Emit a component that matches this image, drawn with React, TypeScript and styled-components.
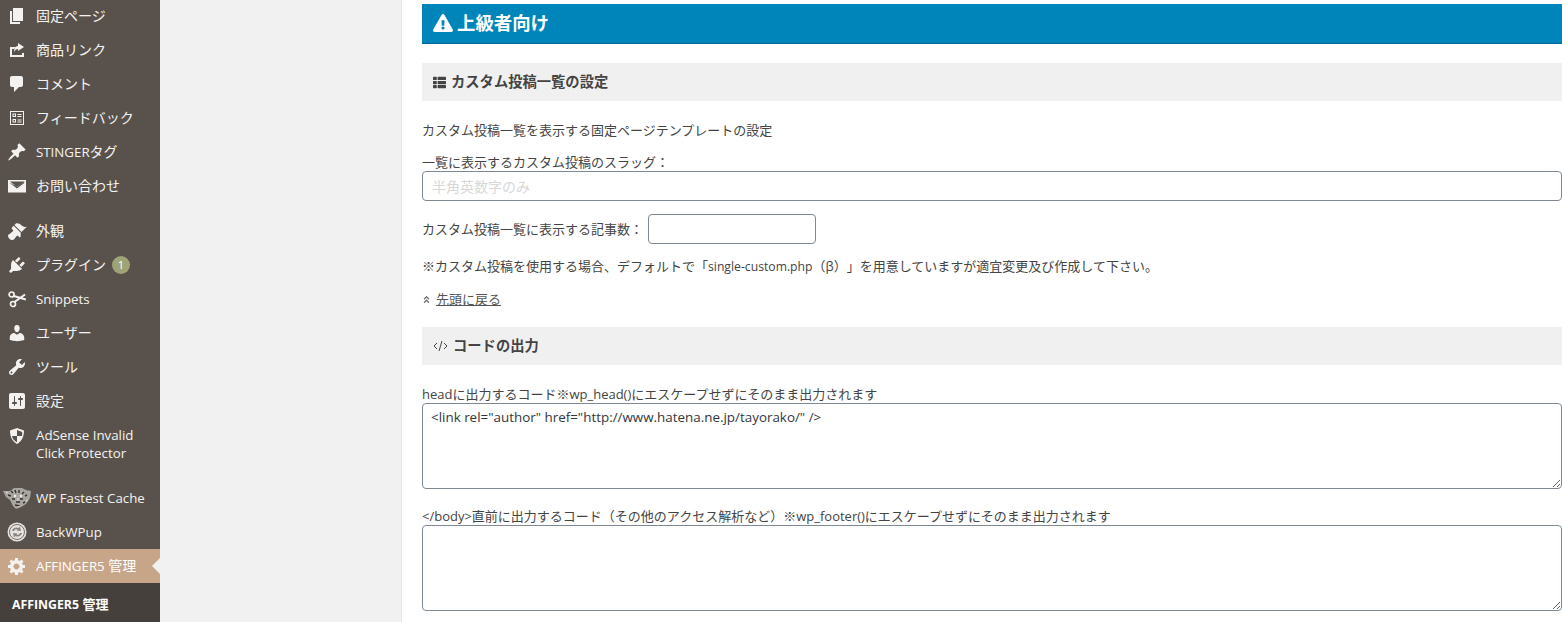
import React from 'react';
import styled, { createGlobalStyle } from 'styled-components';
import { FaAngleDoubleUp, FaExclamationTriangle, FaThList } from 'react-icons/fa';

const FONT = '"Open Sans", "Noto Sans CJK JP", sans-serif';

const GlobalStyle = createGlobalStyle`
	html, body {
		margin: 0;
		height: 622px;
		overflow: hidden;
		background: #f1f1f1;
		font-family: ${FONT};
		text-spacing-trim: space-all;
	}
`;

const Page = styled.div`
	display: flex;
	width: 1562px;
	height: 622px;
	overflow: hidden;
`;

const Sidebar = styled.nav`
	flex: none;
	width: 160px;
	height: 622px;
	background: #59524c;
	overflow: hidden;
	display: flex;
	flex-direction: column;
`;

const MenuItem = styled.div<{ $active?: boolean; $first?: boolean; $gap?: number }>`
	position: relative;
	flex: none;
	display: flex;
	align-items: center;
	box-sizing: border-box;
	height: ${(p) => (p.$first ? 33 : 34)}px;
	padding-bottom: ${(p) => (p.$first ? 1 : 0)}px;
	margin-top: ${(p) => p.$gap ?? 0}px;
	color: #f4f2f0;
	font-size: 14px;
	line-height: 18px;
	background: ${(p) => (p.$active ? '#c7a589' : 'transparent')};

	${(p) =>
		p.$active &&
		`color: #fff;
		&::after {
			content: '';
			position: absolute;
			right: 0;
			top: 9px;
			border: 8px solid transparent;
			border-right-color: #f1f1f1;
			border-left-width: 0;
		}`}
`;

const TallItem = styled(MenuItem)`
	height: auto;
	align-items: flex-start;
	padding: 8px 0;
`;

// Open Sans runs wider than the reference's latin, so latin runs are set a little smaller
const Latin = styled.span<{ $size?: number }>`
	font-size: ${(p) => p.$size ?? 13.3}px;
`;

const MenuIcon = styled.span`
	flex: none;
	width: 36px;
	height: 20px;
	display: flex;
	justify-content: center;
	align-items: center;
	padding-right: 2px;
	box-sizing: border-box;
	color: #f4f2f0;
`;

const Badge = styled.span`
	display: inline-flex;
	justify-content: center;
	align-items: center;
	width: 18px;
	height: 18px;
	margin-left: 6px;
	border-radius: 50%;
	background: #9ea476;
	color: #fff;
	font-size: 11px;
`;

const SubMenu = styled.div`
	flex: 1;
	background: #46403c;
	color: #fff;
	font-size: 13px;
	font-weight: 700;
	padding: 12px 0 0 12px;
	line-height: 18px;
`;

const Gutter = styled.div`
	flex: none;
	width: 241px;
	border-right: 1px solid #e5e5e5;
`;

const Main = styled.main`
	flex: 1;
	min-width: 0;
	height: 622px;
	background: #fff;
	padding: 4px 0 0 20px;
	color: #444;
	font-size: 13px;
	line-height: 18px;
`;

const Banner = styled.h2`
	display: flex;
	align-items: center;
	gap: 4px;
	box-sizing: border-box;
	height: 40px;
	margin: 0;
	padding: 0 0 1px 11px;
	background: #0085ba;
	border-bottom: 1px solid #006799;
	color: #fff;
	font-size: 18.4px;
	font-weight: 700;
`;

const SectionHead = styled.h3<{ $gap: number }>`
	display: flex;
	align-items: center;
	gap: 5px;
	box-sizing: border-box;
	height: 38px;
	margin: ${(p) => p.$gap}px 0 0;
	padding-left: 11px;
	background: #f0f0f0;
	color: #444;
	font-size: 14.3px;
	font-weight: 700;
`;

const Para = styled.p<{ $gap: number }>`
	margin: ${(p) => p.$gap}px 0 0;
`;

const Field = styled.label<{ $gap: number }>`
	display: block;
	margin-top: ${(p) => p.$gap}px;
`;

const TextInput = styled.input`
	display: block;
	box-sizing: border-box;
	width: 100%;
	height: 30px;
	margin: 0;
	padding: 0 8px 0 9px;
	border: 1px solid #7e8993;
	border-radius: 4px;
	background: #fff;
	color: #32373c;
	font: 14px ${FONT};
	outline: none;

	&::placeholder {
		color: #d8d8d8;
	}
`;

const InlineField = styled.label`
	display: flex;
	align-items: center;
	gap: 5px;
	margin-top: 13px;
`;

const NumberInput = styled(TextInput)`
	width: 168px;
`;

const BackLink = styled.div`
	display: flex;
	align-items: center;
	gap: 5px;
	margin-top: 14px;
	color: #777;
	font-size: 13px;

	svg {
		width: 9px;
		height: 9px;
	}

	a {
		color: #555;
		text-decoration: underline;
	}
`;

const CodeArea = styled.textarea`
	display: block;
	box-sizing: border-box;
	width: 100%;
	height: 86px;
	margin: 0;
	padding: 4px 8px;
	border: 1px solid #7e8993;
	border-radius: 4px;
	background: #fff;
	color: #32373c;
	font: 13.4px/18px ${FONT};
	outline: none;
`;

const Dash: React.FC<{ d: string; size?: number }> = ({ d, size = 20 }) => (
	<svg width={size} height={size} viewBox="0 0 20 20" fill="currentColor" fillRule="evenodd">
		<path d={d} />
	</svg>
);

const PATHS = {
	page: 'M6 15V2h10v13H6zm-1 1h8v2H3V5h2v11z',
	share: 'M3 7h5v2H5v6h10v-2h2v4H3zM11 3l6 4-6 4V9c-2 0-3 1-4 3 0-3 1-6 4-6z',
	comment: 'M5 2h9c1.1 0 2 .9 2 2v7c0 1.1-.9 2-2 2h-2l-5 5v-5H5c-1.1 0-2-.9-2-2V4c0-1.1.9-2 2-2z',
	feedback: 'M3 3h14v14H3zM4 4v12h12V4zM5.500 5.500h3.500v3.500H5.500zM6.500 6.500v1.500h1.500V6.500zM5.500 11h3.500v3.500H5.500zM6.500 12v1.500h1.500V12zM10.500 6h4v1h-4zM10.500 8h4v1h-4zM10.500 11.500h4v1h-4zM10.500 13.500h4v1h-4z',
	pin: 'M10.440 3.020l1.820-1.820 6.360 6.350-1.830 1.820c-1.050-.68-2.480-.57-3.410.36l-.75.75c-.92.93-1.040 2.350-.35 3.410l-1.830 1.820-2.410-2.410-2.800 2.790c-.42.42-3.380 2.710-3.800 2.290s1.860-3.390 2.280-3.810l2.790-2.790L4.100 9.360l1.830-1.820c1.050.69 2.480.57 3.400-.36l.75-.75c.93-.92 1.050-2.350.36-3.410z',
	mail: 'M1 4h18v12.500H1zM3 5.500l7 5.500 7-5.500-1-.0H4zM2.800 6.800v.1l7.200 5.700 7.200-5.700-.0-1.700-7.200 5.500z',
	brush: 'M14.480 11.060L7.410 3.990l1.500-1.500c.5-.56 2.300-.47 3.510.32 1.210.8 1.430 1.280 2.910 2.100 1.180.64 2.450 1.260 4.450.85zm-.71.71L6.700 4.700 4.930 6.470c-.39.39-.39 1.020 0 1.410l1.060 1.060c.39.39.39 1.030 0 1.420-.6.6-1.430 1.110-2.210 1.690-.35.26-.7.53-1.010.84C1.430 13.230.99 14.080 1 15c.02.92.5 1.820 1.360 2.670.86.86 1.750 1.340 2.670 1.360.92.01 1.770-.43 2.120-.77.31-.31.58-.66.84-1.010.58-.78 1.090-1.610 1.690-2.210.39-.39 1.030-.39 1.420 0l1.060 1.060c.39.39 1.020.39 1.410 0z',
	plug: 'M13.110 4.360L9.870 7.600 8 5.730l3.240-3.240c.35-.34 1.050-.2 1.560.32.52.51.66 1.210.31 1.550zm-8 1.770l.91-1.120 9.010 9.010-1.190.84c-.71.71-2.630 1.160-3.820 1.160H6.140L4.900 17.260c-.59.59-1.540.59-2.120 0-.59-.58-.59-1.530 0-2.120l1.240-1.240v-3.880c0-1.130.4-3.190 1.090-3.890zm7.260 3.970l3.240-3.240c.34-.35 1.040-.21 1.550.31.52.51.66 1.210.31 1.550l-3.240 3.250z',
	user: 'M10 9.250c-2.270 0-2.730-3.440-2.730-3.440C7 4.020 7.820 2 9.970 2c2.160 0 2.980 2.020 2.710 3.810 0 0-.41 3.440-2.680 3.440zm0 2.570L12.720 10c2.390 0 4.520 2.330 4.520 4.530v2.490s-3.650 1.130-7.240 1.130c-3.650 0-7.240-1.130-7.240-1.130v-2.490c0-2.250 1.940-4.480 4.470-4.480z',
	tools: 'M16.680 9.770c-1.340 1.340-3.300 1.670-4.950.99l-5.410 6.520c-.99.99-2.590.99-3.580 0s-.99-2.590 0-3.570l6.520-5.420c-.68-1.650-.35-3.610.99-4.950 1.280-1.280 3.120-1.620 4.720-1.060l-2.890 2.890 2.820 2.820 2.860-2.870c.53 1.580.18 3.390-1.080 4.650zM3.810 16.210c.4.39 1.040.39 1.430 0 .4-.4.4-1.040 0-1.430-.39-.4-1.030-.4-1.430 0-.39.39-.39 1.030 0 1.430z',
	settings: 'M18 16V4c0-1.100-.9-2-2-2H4c-1.100 0-2 .9-2 2v12c0 1.100.9 2 2 2h12c1.100 0 2-.9 2-2zM8 11h1c.55 0 1 .45 1 1s-.45 1-1 1H8v1.500c0 .28-.22.5-.5.5s-.5-.22-.5-.5V13H6c-.55 0-1-.45-1-1s.45-1 1-1h1V5.500c0-.28.22-.5.5-.5s.5.22.5.5V11zm5-2h-1c-.55 0-1-.45-1-1s.45-1 1-1h1V5.500c0-.28.22-.5.5-.5s.5.22.5.5V7h1c.55 0 1 .45 1 1s-.45 1-1 1h-1v5.500c0 .28-.22.5-.5.5s-.5-.22-.5-.5V9z',
	shield: 'M10 2l7 2.500c0 5-1.500 10.500-7 13.500-5.500-3-7-8.500-7-13.500zM10 4v6H5c.4 2.500 2 4.800 5 6.200V10h5c.2-1.100.2-2.200.2-4.100z',
	gear: 'M18 12h-2.180c-.17.7-.44 1.350-.81 1.930l1.540 1.540-2.100 2.100-1.540-1.540c-.58.36-1.230.63-1.910.79V19H8v-2.180c-.68-.16-1.330-.43-1.910-.79l-1.540 1.540-2.120-2.120 1.540-1.540c-.36-.58-.63-1.230-.79-1.910H1V9.030h2.170c.16-.7.44-1.350.8-1.940L2.430 5.550l2.100-2.100 1.540 1.540c.58-.37 1.240-.64 1.930-.81V2h3v2.180c.68.16 1.330.43 1.910.79l1.540-1.540 2.120 2.120-1.540 1.540c.36.59.64 1.240.8 1.940H18V12zm-8.500 1.500c1.660 0 3-1.340 3-3s-1.340-3-3-3-3 1.340-3 3 1.340 3 3 3z',
};

const Scissors = () => (
	<svg width="20" height="20" viewBox="0 0 20 20" fill="none" stroke="currentColor">
		<circle cx="4.600" cy="5.500" r="2.500" strokeWidth="1.700" />
		<circle cx="6" cy="15" r="2.500" strokeWidth="1.700" />
		<path d="M6.800 7l12 3.500M7.500 13l10.500-7.500" strokeWidth="2" />
	</svg>
);

// logo of the cache plugin, a grey spotted cat head
const CatLogo = () => (
	<svg width="29" height="22" viewBox="0 0 29 22">
		<path d="M0 4l7 0 4-3h8l4 2 5 1-1 7-4 6-5 3-5 2-3-3-3-6-4-3z" fill="#a9a5a1" />
		<path d="M8 4l2 2M12 3l1 3M16 3l0 3M21 5l-2 2M24 8l-2 1M5 8l3 1M9 12l3 0M20 12l-3 0M13 15l4 0M12 18l5 1M22 15l-2 1" stroke="#37322f" strokeWidth="1.400" />
		<circle cx="12" cy="9" r="1.200" fill="#eee" />
		<circle cx="18" cy="9" r="1.200" fill="#eee" />
		<path d="M3 5l2 1M25 13l-2 1M15 20l2-1M15 11l0 3" stroke="#e4e2e0" strokeWidth="1" />
	</svg>
);

const BackupLogo = () => (
	<svg width="20" height="20" viewBox="0 0 20 20">
		<circle cx="10" cy="10" r="9.500" fill="#e6e3e1" />
		<circle cx="10" cy="10" r="7.500" fill="none" stroke="#59524c" strokeWidth=".8" />
		<path d="M5 9c.6-3 4-4.500 6.500-3L13 4.500 14 9l-4.500-.5 1-1C9 6.800 7.500 7.500 7 9zM15 11c-.6 3-4 4.500-6.500 3L7 15.500 6 11l4.500.5-1 1c1.500.7 3 0 3.500-1.500z" fill="#8a837d" />
	</svg>
);

const CodeIcon = () => (
	<svg width="15" height="12" viewBox="0 0 15 12" fill="none" stroke="#444" strokeWidth="1">
		<path d="M4 3L1 6l3 3M11 3l3 3-3 3M9 1L6 11" />
	</svg>
);

const topItems = [
	{ icon: PATHS.page, label: '固定ページ' },
	{ icon: PATHS.share, label: '商品リンク' },
	{ icon: PATHS.comment, label: 'コメント' },
	{ icon: PATHS.feedback, label: 'フィードバック' },
	{
		icon: PATHS.pin,
		label: (
			<span>
				<Latin>STINGER</Latin>タグ
			</span>
		),
	},
	{ icon: PATHS.mail, label: 'お問い合わせ' },
];

const App = () => (
	<Page>
		<GlobalStyle />
		<Sidebar>
			{topItems.map((item, i) => (
				<MenuItem key={i} $first={i === 0}>
					<MenuIcon>
						<Dash d={item.icon} />
					</MenuIcon>
					{item.label}
				</MenuItem>
			))}
			<MenuItem $gap={11}>
				<MenuIcon>
					<Dash d={PATHS.brush} />
				</MenuIcon>
				外観
			</MenuItem>
			<MenuItem>
				<MenuIcon>
					<Dash d={PATHS.plug} />
				</MenuIcon>
				プラグイン
				<Badge>1</Badge>
			</MenuItem>
			<MenuItem>
				<MenuIcon>
					<Scissors />
				</MenuIcon>
				<Latin>Snippets</Latin>
			</MenuItem>
			<MenuItem>
				<MenuIcon>
					<Dash d={PATHS.user} />
				</MenuIcon>
				ユーザー
			</MenuItem>
			<MenuItem>
				<MenuIcon>
					<Dash d={PATHS.tools} />
				</MenuIcon>
				ツール
			</MenuItem>
			<MenuItem>
				<MenuIcon>
					<Dash d={PATHS.settings} />
				</MenuIcon>
				設定
			</MenuItem>
			<TallItem>
				<MenuIcon>
					<Dash d={PATHS.shield} />
				</MenuIcon>
				<Latin>
					AdSense Invalid
					<br />
					Click Protector
				</Latin>
			</TallItem>
			<MenuItem $gap={11}>
				<MenuIcon>
					<CatLogo />
				</MenuIcon>
				<Latin>WP Fastest Cache</Latin>
			</MenuItem>
			<MenuItem>
				<MenuIcon>
					<BackupLogo />
				</MenuIcon>
				<Latin>BackWPup</Latin>
			</MenuItem>
			<MenuItem $active>
				<MenuIcon>
					<Dash d={PATHS.gear} />
				</MenuIcon>
				<span>
					<Latin>AFFINGER5</Latin> 管理
				</span>
			</MenuItem>
			<SubMenu>
				<Latin $size={12.3}>AFFINGER5</Latin> 管理
			</SubMenu>
		</Sidebar>
		<Gutter />
		<Main>
			<Banner>
				<FaExclamationTriangle size={20} />
				上級者向け
			</Banner>
			<SectionHead $gap={19}>
				<FaThList size={13} />
				カスタム投稿一覧の設定
			</SectionHead>
			<Para $gap={20}>カスタム投稿一覧を表示する固定ページテンプレートの設定</Para>
			<Field $gap={14}>
				一覧に表示するカスタム投稿のスラッグ：
				<TextInput placeholder="半角英数字のみ" />
			</Field>
			<InlineField>
				カスタム投稿一覧に表示する記事数：
				<NumberInput />
			</InlineField>
			<Para $gap={13}>
				※カスタム投稿を使用する場合、デフォルトで「<Latin $size={12.2}>single-custom.php</Latin>（β）」を用意していますが適宜変更及び作成して下さい。
			</Para>
			<BackLink>
				<FaAngleDoubleUp />
				<a>先頭に戻る</a>
			</BackLink>
			<SectionHead $gap={19}>
				<CodeIcon />
				コードの出力
			</SectionHead>
			<Field $gap={20}>
				headに出力するコード※wp_head()にエスケープせずにそのまま出力されます
				<CodeArea defaultValue={'<link rel="author" href="http://www.hatena.ne.jp/tayorako/" />'} />
			</Field>
			<Field $gap={18}>
				&lt;/body&gt;直前に出力するコード（その他のアクセス解析など）※wp_footer()にエスケープせずにそのまま出力されます
				<CodeArea />
			</Field>
		</Main>
	</Page>
);

export default App;
